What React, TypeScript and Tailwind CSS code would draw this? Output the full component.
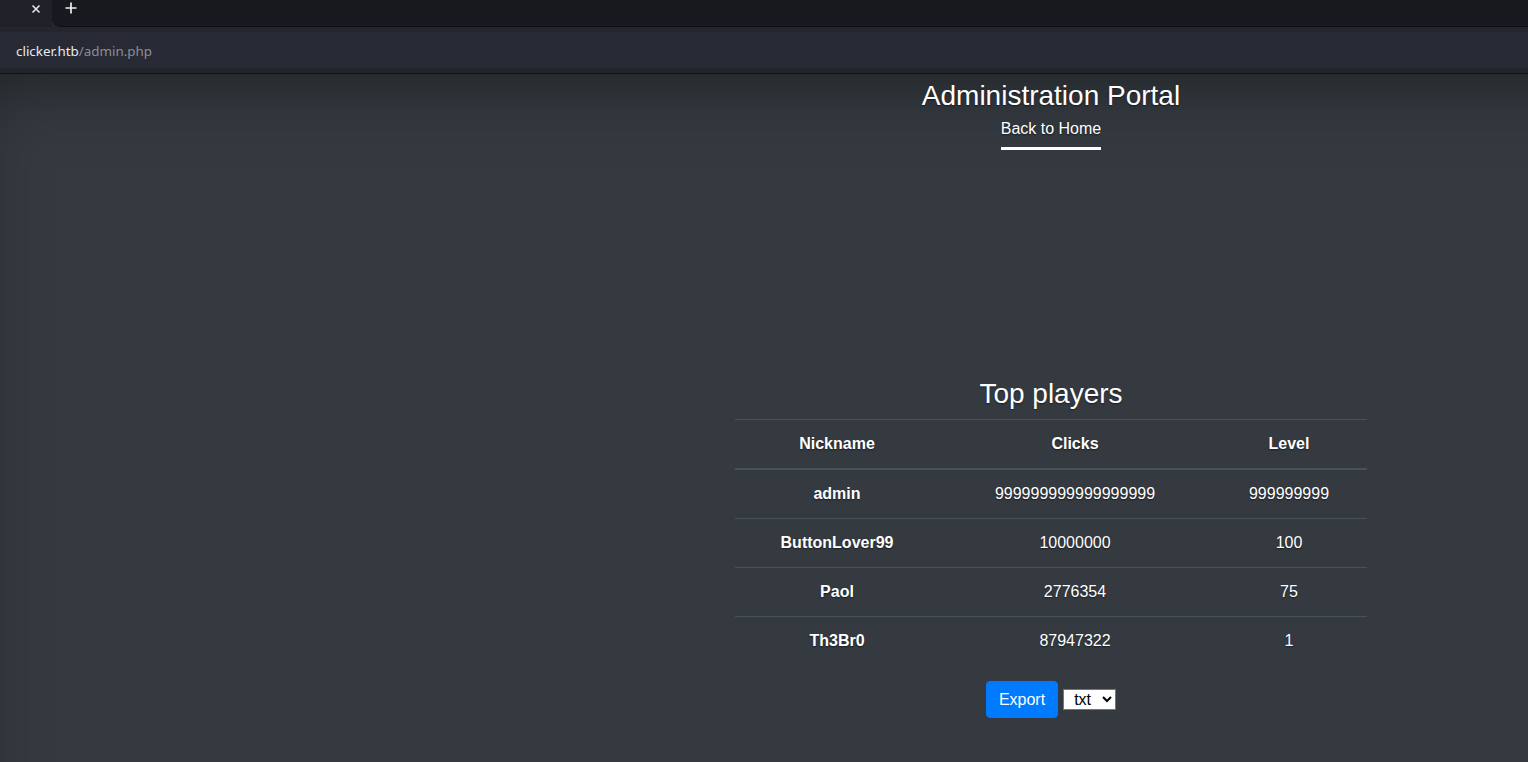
const players = [
  { nickname: 'admin', clicks: '999999999999999999', level: '999999999' },
  { nickname: 'ButtonLover99', clicks: '10000000', level: '100' },
  { nickname: 'Paol', clicks: '2776354', level: '75' },
  { nickname: 'Th3Br0', clicks: '87947322', level: '1' },
]

const shadowText = '[text-shadow:0_0.8px_1.6px_rgba(0,0,0,0.5)]'

function BrowserChrome() {
  return (
    <div className="shrink-0 bg-[#24262e]">
      <div className="flex h-[27px]">
        <div className="flex w-[52px] items-start justify-end bg-[#1f2028] pr-[11px] pt-[4px]">
          <svg width="10" height="10" viewBox="0 0 10 10">
            <path d="M1.5 1.5L8.5 8.5M8.5 1.5L1.5 8.5" stroke="#e6e6e6" strokeWidth="1.6" />
          </svg>
        </div>
        <div className="flex flex-1 items-start rounded-bl-[9px] border-b border-[#0e0f13] bg-[#18191f] pl-[13px] pt-[2px]">
          <svg width="12" height="12" viewBox="0 0 12 12">
            <path d="M6 0.5V11.5M0.5 6H11.5" stroke="#eeeeee" strokeWidth="1.7" />
          </svg>
        </div>
      </div>
      <div className="flex h-[47px] items-center border-b border-[#101115] bg-[#272a34] pl-[16px] pt-[2px] shadow-[inset_0_5px_0_#24262e,inset_0_-5px_0_#23252d]">
        <span className="text-[13.4px] font-['Noto_Sans',sans-serif] text-[#e9e9ec]">
          clicker.htb<span className="text-[#8b8e97]">/admin.php</span>
        </span>
      </div>
    </div>
  )
}

export default function App() {
  return (
    <div className="flex h-[762px] flex-col overflow-hidden bg-[#343a40] font-['Liberation_Sans',Arial,sans-serif]">
      <BrowserChrome />
      <div className="flex-1 overflow-hidden">
        <div
          className={`-ml-[40px] flex h-[1100px] w-[2182px] flex-col items-center bg-[#343a40] text-white shadow-[inset_0_0_80px_rgba(0,0,0,0.5)] ${shadowText}`}
        >
          <header className="flex flex-col items-center pt-[5px]">
            <h3 className="text-[28px] leading-[1.2]">Administration Portal</h3>
            <nav className="mt-[4px]">
              <a className="block border-b-[3px] border-white pb-[6px] text-[16px] leading-[24px]">
                Back to Home
              </a>
            </nav>
          </header>

          <main className="mt-[227px] flex w-[632px] flex-col items-center">
            <h2 className="text-[28px] leading-[1.2]">Top players</h2>
            <table className="mt-[9px] w-full border-collapse text-center text-[16px] leading-[24px]">
              <thead>
                <tr className="border-t border-b-2 border-[#4b5158]">
                  <th className="w-[204px] py-[12px] font-bold">Nickname</th>
                  <th className="w-[272px] py-[12px] font-bold">Clicks</th>
                  <th className="py-[12px] font-bold">Level</th>
                </tr>
              </thead>
              <tbody>
                {players.map((player) => (
                  <tr key={player.nickname} className="border-t border-[#4b5158] first:border-t-0">
                    <th className="py-[12px] font-bold">{player.nickname}</th>
                    <td className="py-[12px]">{player.clicks}</td>
                    <td className="py-[12px]">{player.level}</td>
                  </tr>
                ))}
              </tbody>
            </table>
            <form className="mt-[16px] flex items-center gap-[5px]">
              <button
                type="button"
                className="h-[37px] rounded-[4px] border border-[#007bff] bg-[#007bff] px-[12px] text-[16px] leading-[24px] text-white"
              >
                Export
              </button>
              <select
                defaultValue="txt"
                className="h-[21px] w-[53px] border border-[#767676] bg-white pl-[6px] text-[16px] leading-[18px] text-black [text-shadow:none]"
              >
                <option value="txt">txt</option>
                <option value="json">json</option>
                <option value="html">html</option>
              </select>
            </form>
          </main>
        </div>
      </div>
    </div>
  )
}
